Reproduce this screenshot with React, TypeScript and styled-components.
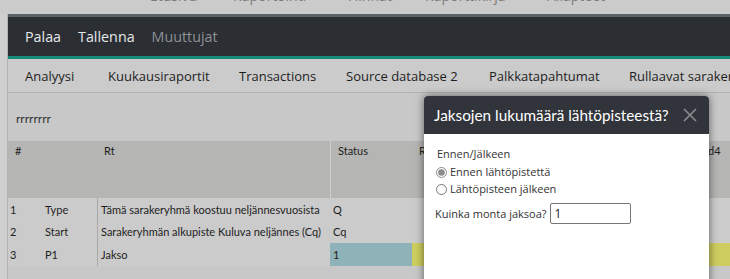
import React from 'react';
import styled, { createGlobalStyle } from 'styled-components';

const GlobalStyle = createGlobalStyle`
  html, body {
    margin: 0;
    padding: 0;
    background: #c9c9c9;
    font-family: 'Open Sans', 'DejaVu Sans', sans-serif;
    overflow: hidden;
  }
`;

const Page = styled.div`
  width: 730px;
  height: 279px;
  position: relative;
  overflow: hidden;
`;

const TopStrip = styled.div`
  height: 14px;
  overflow: hidden;
  background: #cbcbcb;
  display: flex;
  padding-left: 150px;
`;

const TopLink = styled.span<{ $w: number }>`
  flex: 0 0 ${(p) => p.$w}px;
  margin-top: -13px;
  font-size: 14px;
  line-height: 18px;
  color: #7a7a7a;
  white-space: nowrap;
`;

const Body = styled.div`
  display: flex;
`;

const Gutter = styled.div`
  width: 7px;
  background: #cfcfcf;
  border-right: 1px solid #b3b3b3;
  height: 265px;
`;

const Main = styled.div`
  flex: 1;
  min-width: 0;
`;

const Header = styled.div`
  height: 39px;
  background: #2b2e33;
  border-top: 3px solid #5b6369;
  border-bottom: 3px solid #17897a;
  display: flex;
  align-items: center;
  padding-left: 17px;
  gap: 17px;
`;

const HeaderLink = styled.span<{ $muted?: boolean }>`
  font-size: 14.3px;
  color: ${(p) => (p.$muted ? '#8d9196' : '#e6e8ea')};
`;

const Tabs = styled.div`
  height: 33px;
  background: #cbcbcb;
  border-bottom: 1px solid #b3b3b3;
  display: flex;
  align-items: center;
  padding-left: 17px;
  white-space: nowrap;
  overflow: hidden;
`;

const Tab = styled.span<{ $w: number }>`
  flex: 0 0 ${(p) => p.$w}px;
  font-size: 13px;
  color: #1e1e1e;
`;

const Filter = styled.div`
  height: 48px;
  background: #c8c8c8;
  display: flex;
  align-items: center;
  padding-left: 8px;
  padding-top: 3px;
  box-sizing: border-box;
  font-family: 'Lato', sans-serif;
  font-size: 12px;
  color: #333;
`;

const Table = styled.div`
  background: #cbcbcb;
  font-family: 'Lato', sans-serif;
`;

const HeadRow = styled.div`
  height: 57px;
  background: #b5b5b3;
  display: grid;
  grid-template-columns: 89px 233px 82px 1fr;
  font-size: 11px;
  color: #1e1e1e;
`;

const HeadCell = styled.div<{ $line?: boolean }>`
  padding: 3px 7px;
  border-left: ${(p) => (p.$line ? '1px solid #cfcfcd' : 'none')};
`;

const Row = styled.div`
  height: 22.5px;
  display: grid;
  grid-template-columns: 32px 57px 233px 82px 1fr;
  font-size: 11px;
  color: #1e1e1e;
  align-items: stretch;
`;

const Cell = styled.div<{ $pad?: number; $line?: boolean; $bg?: string }>`
  display: flex;
  align-items: center;
  padding-left: ${(p) => p.$pad ?? 3}px;
  border-left: ${(p) => (p.$line ? '1px solid #a9a9a9' : 'none')};
  background: ${(p) => p.$bg ?? 'transparent'};
  white-space: nowrap;
  overflow: hidden;
`;

const Rest = styled.div`
  height: 14px;
  background: #c8c8c8;
`;

const HeadRight = styled.span`
  position: absolute;
  left: 708px;
  top: 144px;
  font-family: 'Lato', sans-serif;
  font-size: 11px;
  color: #1e1e1e;
`;

const Modal = styled.div`
  position: absolute;
  left: 424px;
  top: 96px;
  width: 285px;
  height: 230px;
  background: #fff;
  border-radius: 4px 4px 0 0;
  box-shadow: 0 0 8px rgba(0, 0, 0, 0.55);
  overflow: hidden;
`;

const ModalHead = styled.div`
  height: 38px;
  background: #31353b;
  display: flex;
  align-items: center;
  justify-content: space-between;
  padding: 0 12px 0 10px;
`;

const ModalTitle = styled.span`
  color: #fff;
  font-family: 'Lato', sans-serif;
  font-size: 15.3px;
  white-space: nowrap;
`;

const ModalBody = styled.div`
  padding: 12px 12px;
  font-size: 11px;
  color: #333;
  display: flex;
  flex-direction: column;
`;

const GroupLabel = styled.div`
  padding-left: 1px;
  margin-bottom: 2px;
`;

const RadioRow = styled.label`
  display: flex;
  align-items: center;
  height: 17px;
`;

const Radio = styled.input`
  width: 11px;
  height: 11px;
  margin: 2px 3px 0 0;
  accent-color: #8a8a8a;
`;

const Field = styled.div`
  display: flex;
  align-items: center;
  margin-top: 6px;
  gap: 3px;
  margin-left: -1px;
`;

const Input = styled.input`
  width: 71px;
  height: 17px;
  border: 1px solid #767676;
  border-radius: 2px;
  padding: 1px 4px;
  font-family: inherit;
  font-size: 12px;
  color: #222;
`;

const CloseIcon = () => (
  <svg width="14" height="14" viewBox="0 0 14 14">
    <path d="M1 1L13 13M13 1L1 13" stroke="#8a8e93" strokeWidth="1.6" />
  </svg>
);

const rows = [
  { n: '1', key: 'Type', text: 'Tämä sarakeryhmä koostuu neljännesvuosista', status: 'Q' },
  { n: '2', key: 'Start', text: 'Sarakeryhmän alkupiste Kuluva neljännes (Cq)', status: 'Cq' },
  { n: '3', key: 'P1', text: 'Jakso', status: '1', hl: true },
];

export default function App() {
  return (
    <Page>
      <GlobalStyle />
      <TopStrip>
        <TopLink $w={83}>Etusivu</TopLink>
        <TopLink $w={115}>Raportointi</TopLink>
        <TopLink $w={77}>Hinnat</TopLink>
        <TopLink $w={122}>Raporttikirja</TopLink>
        <TopLink $w={80}>Aliapteet</TopLink>
      </TopStrip>
      <Body>
        <Gutter />
        <Main>
          <Header>
            <HeaderLink>Palaa</HeaderLink>
            <HeaderLink>Tallenna</HeaderLink>
            <HeaderLink $muted>Muuttujat</HeaderLink>
          </Header>
          <Tabs>
            <Tab $w={83}>Analyysi</Tab>
            <Tab $w={131}>Kuukausiraportit</Tab>
            <Tab $w={107}>Transactions</Tab>
            <Tab $w={143}>Source database 2</Tab>
            <Tab $w={140}>Palkkatapahtumat</Tab>
            <Tab $w={140}>Rullaavat sarakeryhmät</Tab>
          </Tabs>
          <Filter>rrrrrrrr</Filter>
          <Table>
            <HeadRow>
              <HeadCell>#</HeadCell>
              <HeadCell>Rt</HeadCell>
              <HeadCell $line>Status</HeadCell>
              <HeadCell>R</HeadCell>
            </HeadRow>
            {rows.map((r) => (
              <Row key={r.n}>
                <Cell $pad={2}>{r.n}</Cell>
                <Cell $pad={5}>{r.key}</Cell>
                <Cell $line>{r.text}</Cell>
                <Cell $bg={r.hl ? '#8fb2b8' : undefined}>{r.status}</Cell>
                <Cell $bg={r.hl ? '#cdcd5f' : undefined} />
              </Row>
            ))}
          </Table>
          <Rest />
        </Main>
      </Body>
      <HeadRight>d4</HeadRight>
      <Modal>
        <ModalHead>
          <ModalTitle>Jaksojen lukumäärä lähtöpisteestä?</ModalTitle>
          <CloseIcon />
        </ModalHead>
        <ModalBody>
          <GroupLabel>Ennen/Jälkeen</GroupLabel>
          <RadioRow>
            <Radio type="radio" name="pos" defaultChecked />
            Ennen lähtöpistettä
          </RadioRow>
          <RadioRow>
            <Radio type="radio" name="pos" />
            Lähtöpisteen jälkeen
          </RadioRow>
          <Field>
            <span>Kuinka monta jaksoa?</span>
            <Input defaultValue="1" />
          </Field>
        </ModalBody>
      </Modal>
    </Page>
  );
}
